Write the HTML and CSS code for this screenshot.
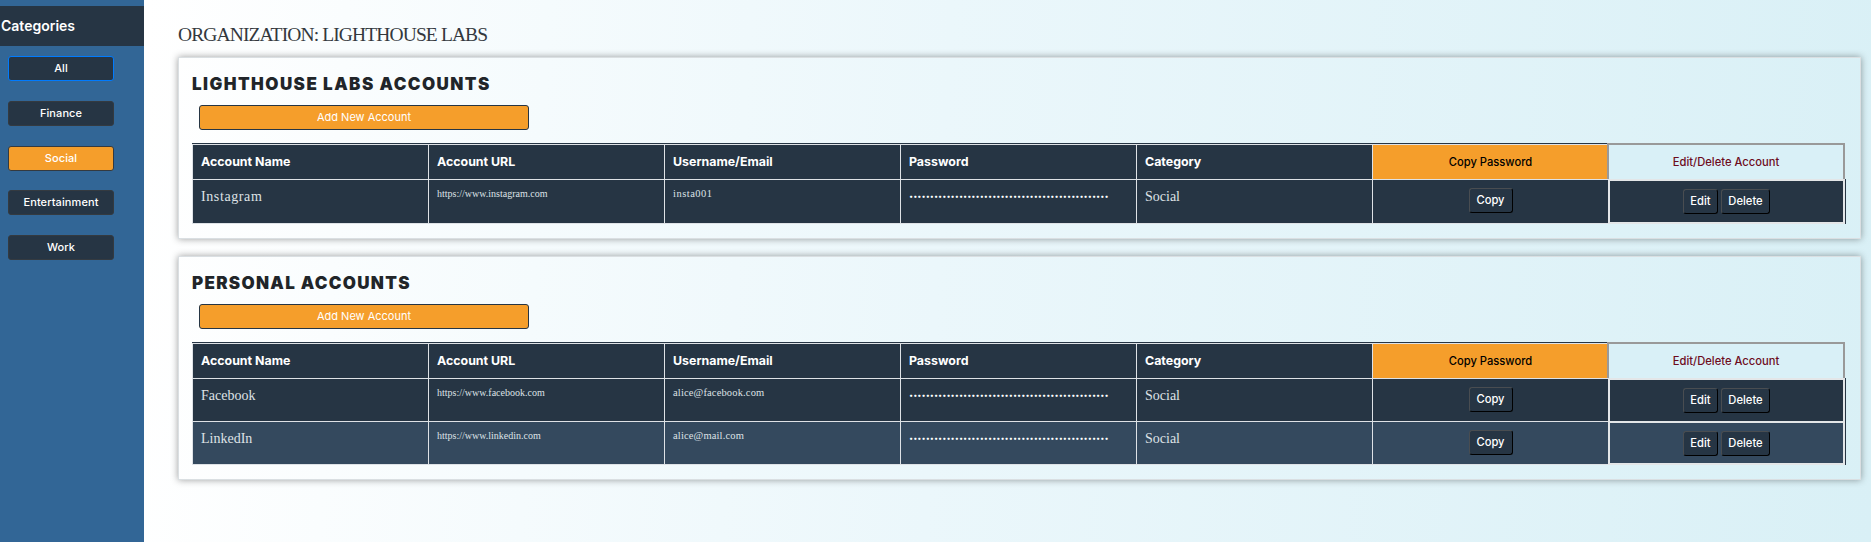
FILE: index.html
```html
<!DOCTYPE html>
<html lang="en">
<head>
<meta charset="utf-8">
<title>Accounts</title>
<link rel="stylesheet" href="styles.css">
</head>
<body>
<div class="app">
  <aside class="sidebar">
    <h3 class="side-title">Categories</h3>
    <nav class="cats">
      <button class="cat focus">All</button>
      <button class="cat">Finance</button>
      <button class="cat active">Social</button>
      <button class="cat">Entertainment</button>
      <button class="cat">Work</button>
    </nav>
  </aside>
  <main class="main">
    <h1 class="org">ORGANIZATION: LIGHTHOUSE LABS</h1>
    <section class="card">
      <h2 class="card-title">LIGHTHOUSE LABS ACCOUNTS</h2>
      <button class="add">Add New Account</button>
      <div class="table">
        <div class="row head">
          <div class="cell">Account Name</div><div class="cell">Account URL</div><div class="cell">Username/Email</div><div class="cell">Password</div><div class="cell">Category</div><div class="cell copy-head">Copy Password</div><div class="cell edit-head">Edit/Delete Account</div>
        </div>
        <div class="row tall last">
          <div class="cell name wide">Instagram</div><div class="cell url">https://www.instagram.com</div><div class="cell user wide">insta001</div><div class="cell dots">••••••••••••••••••••••••••••••••••••••••••••••••</div><div class="cell name">Social</div><div class="cell copy"><button class="btn b-copy">Copy</button></div><div class="cell edit"><button class="btn b-edit">Edit</button><button class="btn b-del">Delete</button></div>
        </div>
      </div>
    </section>
    <section class="card second">
      <h2 class="card-title personal">PERSONAL ACCOUNTS</h2>
      <button class="add">Add New Account</button>
      <div class="table">
        <div class="row head">
          <div class="cell">Account Name</div><div class="cell">Account URL</div><div class="cell">Username/Email</div><div class="cell">Password</div><div class="cell">Category</div><div class="cell copy-head">Copy Password</div><div class="cell edit-head">Edit/Delete Account</div>
        </div>
        <div class="row">
          <div class="cell name">Facebook</div><div class="cell url">https://www.facebook.com</div><div class="cell user">alice@facebook.com</div><div class="cell dots">••••••••••••••••••••••••••••••••••••••••••••••••</div><div class="cell name">Social</div><div class="cell copy"><button class="btn b-copy">Copy</button></div><div class="cell edit"><button class="btn b-edit">Edit</button><button class="btn b-del">Delete</button></div>
        </div>
        <div class="row alt last">
          <div class="cell name">LinkedIn</div><div class="cell url">https://www.linkedin.com</div><div class="cell user">alice@mail.com</div><div class="cell dots">••••••••••••••••••••••••••••••••••••••••••••••••</div><div class="cell name">Social</div><div class="cell copy"><button class="btn b-copy">Copy</button></div><div class="cell edit"><button class="btn b-edit">Edit</button><button class="btn b-del">Delete</button></div>
        </div>
      </div>
    </section>
  </main>
</div>
</body>
</html>
```
FILE: styles.css
```css
* { box-sizing: border-box; }
body { margin: 0; font-family: Inter, "Open Sans", sans-serif; color: #212529; overflow: hidden; }
h1, h2, h3 { margin: 0; }
button { font-family: inherit; margin: 0; padding: 0; white-space: nowrap; }
.app { display: flex; height: 542px; }
.sidebar { width: 144px; flex: none; padding-top: 6px; background: #326696; }
.side-title { height: 40px; line-height: 39px; padding-left: 1px; background: #263544; color: #fff; font-size: 14px; font-weight: 600; }
.cats { display: grid; grid-auto-rows: 25px; row-gap: 19.75px; padding: 10px 30px 0 8px; }
.cat { border: 1px solid #343a40; border-radius: 3px; background: #263544; color: #fff; font-size: 11px; font-weight: 500; line-height: 21px; letter-spacing: .1px; }
.cat.focus { border-color: #007bff; }
.cat.active { background: #f59e2b; }
.main { flex: 1; padding: 21px 10px 0 34px; background: linear-gradient(93deg, #fff 0%, #ebf7fb 46%, #d9f0f6 100%); }
.org { height: 36px; font: 400 19.5px/28px "Liberation Serif", serif; letter-spacing: -0.88px; color: #33383d; white-space: nowrap; }
.card { width: 1683px; height: 182px; padding: 14px 13px 0; border: 1px solid #dadfe2; box-shadow: 0 0 7px rgba(0, 0, 0, .38); }
.card.second { height: 224px; margin-top: 17px; }
.card-title { height: 33px; line-height: 25px; font-size: 17px; font-weight: 900; letter-spacing: 1.45px; white-space: nowrap; }
.card-title.personal { letter-spacing: 1.3px; }
.add { display: block; width: 330px; height: 25px; margin-left: 7px; border: 1px solid #263544; border-radius: 3px; background: #f59e2b; color: #fff; font-size: 11px; line-height: 21px; }
.table { width: 1653px; margin-top: 14px; }
.row { display: grid; grid-template-columns: repeat(6, 236px) 237px; height: 43px; }
.row.head { height: 35px; }
.row.tall { height: 45px; }
.row.last:not(.tall) { height: 44px; }
.cell { border-top: 1px solid #dee2e6; border-left: 1px solid #dee2e6; padding-left: 8px; background: #263544; color: #fff; white-space: nowrap; }
.alt .cell { background: #34495e; }
.last .cell { border-bottom: 1px solid #dee2e6; }
.head .cell { font-size: 12.4px; font-weight: 700; line-height: 34px; box-shadow: 0 -1px 0 #263544; }
.head .copy-head { padding: 0; text-align: center; background: #f59e2b; color: #000; font-size: 11.2px; font-weight: 500; }
.head .edit-head { margin: -1px 0 0 -1px; padding: 0; border: 2px solid #999; border-bottom: 0; background: #d9f0f7; box-shadow: none; color: #6d0b1d; text-align: center; font-size: 11.2px; font-weight: 500; }
.name { font: 400 14px/34px "Liberation Serif", serif; color: #dee2e6; }
.name.wide { letter-spacing: .6px; }
.url { font: 400 10px/27px "Liberation Serif", serif; color: #dee2e6; }
.user { font: 400 10.5px/28px "Liberation Serif", serif; color: #dee2e6; letter-spacing: .15px; }
.user.wide { letter-spacing: .5px; }
.dots { font-size: 7.4px; line-height: 34px; }
.copy { display: flex; justify-content: center; padding: 8px 0 0; }
.row .edit { display: flex; justify-content: center; gap: 3px; padding: 8px 0 0; border: 2px solid #e3e6e8; border-bottom: 0; box-shadow: 1px 0 0 #263544; }
.last .edit { border-bottom: 2px solid #e3e6e8; }
.btn { height: 25px; border: 1px solid #000; border-top-color: #494d51; border-left-color: #494d51; border-radius: 3px; background: #263544; color: #fff; font-size: 11.2px; font-weight: 500; line-height: 21px; }
.b-copy { width: 44px; }
.b-edit { width: 35px; }
.b-del { width: 49px; }
```
